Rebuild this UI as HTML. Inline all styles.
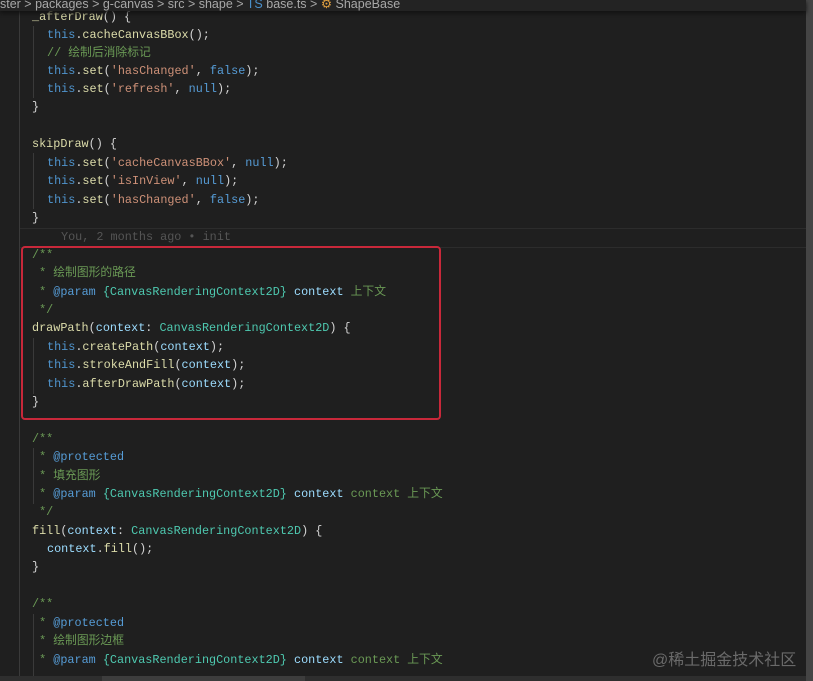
<!DOCTYPE html>
<html><head><meta charset="utf-8"><style>
body{margin:0;width:813px;height:681px;background:#1f1f1f;overflow:hidden;position:relative;font-family:"Liberation Mono","Noto Sans CJK SC",monospace;font-size:11.8px;color:#d4d4d4}
.bc{position:absolute;left:0;top:0;width:806px;height:11px;background:#232323;box-shadow:0 2px 4px #111;font-family:"Liberation Sans",sans-serif;font-size:12.5px;color:#a8a8a8;line-height:8px;white-space:pre;overflow:hidden;z-index:2}
.l{position:absolute;white-space:pre;height:18px;line-height:18px}
.t{color:#4f94cd}.f{color:#dcdcaa}.s{color:#ce9178}.c{color:#6a9955}.k{color:#569cd6}.v{color:#9cdcfe}.ty{color:#4ec9b0}.p{color:#d4d4d4}
.g{position:absolute;width:1px;background:#3a3a3a}
.box{position:absolute;left:21px;top:246px;width:416px;height:170px;border:2px solid #c8283a;border-radius:4px}
.sb{position:absolute;right:0;top:0;width:7px;height:681px;background:#454545}
</style></head><body>
<div class="bc">ster &gt; packages &gt; g-canvas &gt; src &gt; shape &gt; <span style="color:#4a8fc9">TS</span> base.ts &gt; <span style="color:#e0a040">⚙</span> ShapeBase</div>
<div class="g" style="left:19px;top:10px;height:671px"></div>
<div class="g" style="left:33px;top:26px;height:72px"></div>
<div class="g" style="left:33px;top:153px;height:56px"></div>
<div class="g" style="left:33px;top:338px;height:56px"></div>
<div class="g" style="left:33px;top:448px;height:56px"></div>
<div class="g" style="left:33px;top:614px;height:67px"></div>
<div style="position:absolute;left:20px;top:228px;width:786px;height:18px;border-top:1px solid #2c2c2c;border-bottom:1px solid #2c2c2c"></div>
<div class="l" style="left:32px;top:8px"><span class="f">_afterDraw</span>() {</div>
<div class="l" style="left:47px;top:26px"><span class="t">this</span>.<span class="f">cacheCanvasBBox</span>();</div>
<div class="l c" style="left:47px;top:44px">// 绘制后消除标记</div>
<div class="l" style="left:47px;top:62px"><span class="t">this</span>.<span class="f">set</span>(<span class="s">'hasChanged'</span>, <span class="k">false</span>);</div>
<div class="l" style="left:47px;top:80px"><span class="t">this</span>.<span class="f">set</span>(<span class="s">'refresh'</span>, <span class="k">null</span>);</div>
<div class="l" style="left:32px;top:98px">}</div>
<div class="l" style="left:32px;top:135px"><span class="f">skipDraw</span>() {</div>
<div class="l" style="left:47px;top:154px"><span class="t">this</span>.<span class="f">set</span>(<span class="s">'cacheCanvasBBox'</span>, <span class="k">null</span>);</div>
<div class="l" style="left:47px;top:172px"><span class="t">this</span>.<span class="f">set</span>(<span class="s">'isInView'</span>, <span class="k">null</span>);</div>
<div class="l" style="left:47px;top:191px"><span class="t">this</span>.<span class="f">set</span>(<span class="s">'hasChanged'</span>, <span class="k">false</span>);</div>
<div class="l" style="left:32px;top:209px">}</div>
<div class="l" style="left:61px;top:228px;color:#555">You, 2 months ago • init</div>
<div class="l c" style="left:32px;top:246px">/**</div>
<div class="l c" style="left:32px;top:264px"> * 绘制图形的路径</div>
<div class="l c" style="left:32px;top:283px"> * <span class="k">@param</span> <span class="ty">{CanvasRenderingContext2D}</span> <span class="v">context</span> 上下文</div>
<div class="l c" style="left:32px;top:301px"> */</div>
<div class="l" style="left:32px;top:319px"><span class="f">drawPath</span>(<span class="v">context</span>: <span class="ty">CanvasRenderingContext2D</span>) {</div>
<div class="l" style="left:47px;top:338px"><span class="t">this</span>.<span class="f">createPath</span>(<span class="v">context</span>);</div>
<div class="l" style="left:47px;top:356px"><span class="t">this</span>.<span class="f">strokeAndFill</span>(<span class="v">context</span>);</div>
<div class="l" style="left:47px;top:375px"><span class="t">this</span>.<span class="f">afterDrawPath</span>(<span class="v">context</span>);</div>
<div class="l" style="left:32px;top:393px">}</div>
<div class="box"></div>
<div class="l c" style="left:32px;top:430px">/**</div>
<div class="l c" style="left:32px;top:448px"> * <span class="k">@protected</span></div>
<div class="l c" style="left:32px;top:467px"> * 填充图形</div>
<div class="l c" style="left:32px;top:485px"> * <span class="k">@param</span> <span class="ty">{CanvasRenderingContext2D}</span> <span class="v">context</span> context 上下文</div>
<div class="l c" style="left:32px;top:503px"> */</div>
<div class="l" style="left:32px;top:522px"><span class="f">fill</span>(<span class="v">context</span>: <span class="ty">CanvasRenderingContext2D</span>) {</div>
<div class="l" style="left:47px;top:540px"><span class="v">context</span>.<span class="f">fill</span>();</div>
<div class="l" style="left:32px;top:558px">}</div>
<div class="l c" style="left:32px;top:595px">/**</div>
<div class="l c" style="left:32px;top:614px"> * <span class="k">@protected</span></div>
<div class="l c" style="left:32px;top:632px"> * 绘制图形边框</div>
<div class="l c" style="left:32px;top:651px"> * <span class="k">@param</span> <span class="ty">{CanvasRenderingContext2D}</span> <span class="v">context</span> context 上下文</div>
<div class="l" style="left:652px;top:652px;font-family:'Liberation Sans','Noto Sans CJK SC',sans-serif;font-size:16px;color:#6a6a6a">@稀土掘金技术社区</div>
<div style="position:absolute;left:0;top:676px;width:806px;height:5px;background:#2e2e2e"></div>
<div style="position:absolute;left:102px;top:676px;width:203px;height:5px;background:#3d3d3d"></div>
<div class="sb"></div>
</body></html>
